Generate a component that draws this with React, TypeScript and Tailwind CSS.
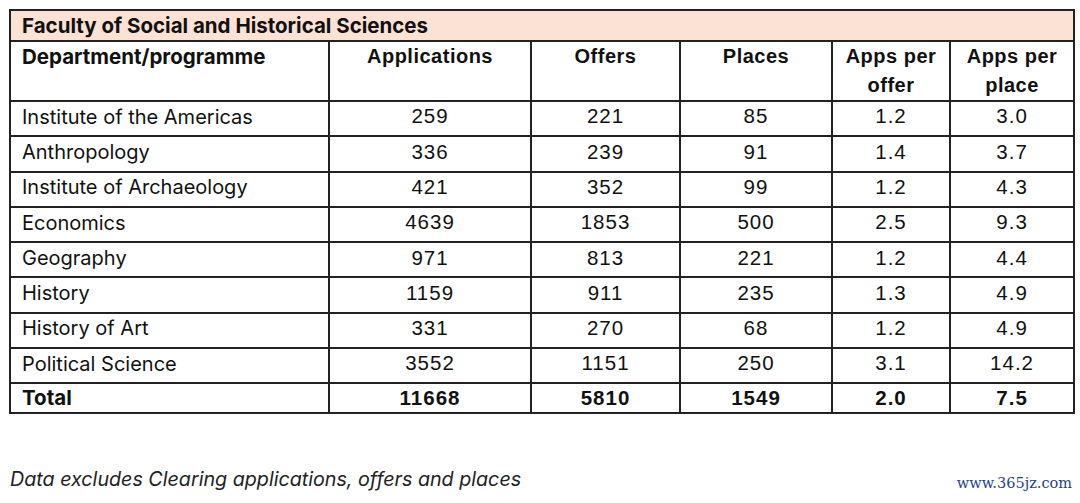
const rows = [
  { name: "Institute of the Americas", apps: "259", offers: "221", places: "85", perOffer: "1.2", perPlace: "3.0" },
  { name: "Anthropology", apps: "336", offers: "239", places: "91", perOffer: "1.4", perPlace: "3.7" },
  { name: "Institute of Archaeology", apps: "421", offers: "352", places: "99", perOffer: "1.2", perPlace: "4.3" },
  { name: "Economics", apps: "4639", offers: "1853", places: "500", perOffer: "2.5", perPlace: "9.3" },
  { name: "Geography", apps: "971", offers: "813", places: "221", perOffer: "1.2", perPlace: "4.4" },
  { name: "History", apps: "1159", offers: "911", places: "235", perOffer: "1.3", perPlace: "4.9" },
  { name: "History of Art", apps: "331", offers: "270", places: "68", perOffer: "1.2", perPlace: "4.9" },
  { name: "Political Science", apps: "3552", offers: "1151", places: "250", perOffer: "3.1", perPlace: "14.2" },
]

const cell = "border-2 border-[#222] px-[11px]"
const num = `${cell} text-center font-['Liberation_Sans',Arial,sans-serif] text-[20.5px] tracking-[1px]`

export default function App() {
  return (
    <div className="min-h-screen bg-white text-[#111] font-['Inter',sans-serif]">
      <div className="pl-[9px] pt-[9px]">
        <table className="w-[1064px] table-fixed border-collapse">
          <colgroup>
            <col className="w-[319px]" />
            <col className="w-[202px]" />
            <col className="w-[149px]" />
            <col className="w-[152px]" />
            <col className="w-[118px]" />
            <col className="w-[124px]" />
          </colgroup>
          <thead>
            <tr className="h-[31px] bg-[#fbe2d5]">
              <th colSpan={6} className={`${cell} pt-[2px] text-left text-[20.5px] font-bold leading-none`}>
                Faculty of Social and Historical Sciences
              </th>
            </tr>
            <tr className="h-[58px] align-top font-['Liberation_Sans',Arial,sans-serif] text-[20px] font-bold leading-[29px] tracking-[0.5px]">
              <th className={`${cell} text-left font-['Inter',sans-serif] text-[20.5px] tracking-normal`}>Department/programme</th>
              <th className={`${cell} text-center`}>Applications</th>
              <th className={`${cell} text-center`}>Offers</th>
              <th className={`${cell} text-center`}>Places</th>
              <th className={`${cell} text-center px-1`}>Apps per offer</th>
              <th className={`${cell} text-center px-1`}>Apps per place</th>
            </tr>
          </thead>
          <tbody>
            {rows.map((r) => (
              <tr key={r.name} className="h-[35.3px] leading-none [&>td]:pb-[4px]">
                <td className={`${cell} text-[20px]`}>{r.name}</td>
                <td className={num}>{r.apps}</td>
                <td className={num}>{r.offers}</td>
                <td className={num}>{r.places}</td>
                <td className={num}>{r.perOffer}</td>
                <td className={num}>{r.perPlace}</td>
              </tr>
            ))}
            <tr className="h-[30px] leading-none font-bold [&>td]:pb-[1px]">
              <td className={`${cell} text-[20.5px]`}>Total</td>
              <td className={num}>11668</td>
              <td className={num}>5810</td>
              <td className={num}>1549</td>
              <td className={num}>2.0</td>
              <td className={num}>7.5</td>
            </tr>
          </tbody>
        </table>
      </div>
      <div className="flex items-end justify-between pl-[10px] pr-[8px] pt-[56px]">
        <p className="text-[19.7px] italic leading-none text-[#222]">
          Data excludes Clearing applications, offers and places
        </p>
        <span className="font-['DejaVu_Serif',serif] text-[14.5px] leading-none text-[#1d3f8f]">www.365jz.com</span>
      </div>
    </div>
  )
}
